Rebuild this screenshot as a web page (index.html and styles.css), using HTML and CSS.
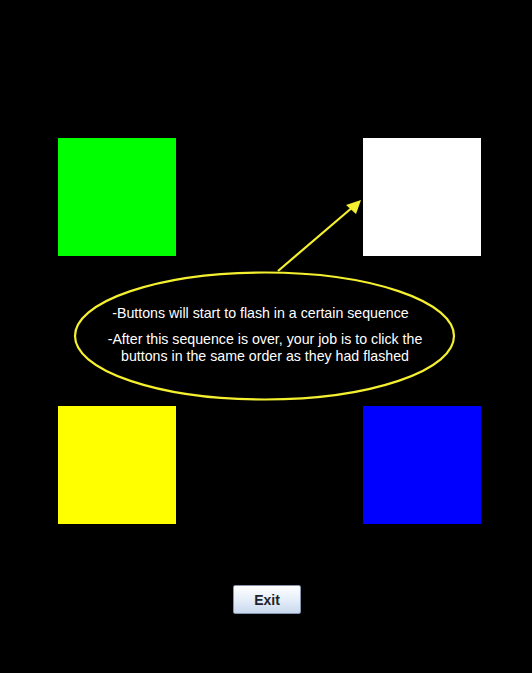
FILE: index.html
```html
<!DOCTYPE html>
<html>
<head>
<meta charset="utf-8">
<link rel="stylesheet" href="styles.css">
</head>
<body>
<div class="page">
  <div class="board">
    <div class="pad green"></div>
    <div class="pad white"></div>
    <div class="pad yellow"></div>
    <div class="pad blue"></div>
  </div>
  <div class="footer">
    <button class="exit">Exit</button>
  </div>
  <svg class="overlay" width="532" height="673" viewBox="0 0 532 673">
    <ellipse cx="264.5" cy="336" rx="189.5" ry="63.5" fill="#000" stroke="#f4f030" stroke-width="2.2"/>
    <line x1="278" y1="271" x2="354" y2="206" stroke="#f4f030" stroke-width="2.2"/>
    <polygon points="361,200 346,205 356,214" fill="#f4f030"/>
  </svg>
  <div class="tip">
    <p class="line first">-Buttons will start to flash in a certain sequence</p>
    <p class="line">-After this sequence is over, your job is to click the<br>buttons in the same order as they had flashed</p>
  </div>
</div>
</body>
</html>
```
FILE: styles.css
```css
html, body {
  margin: 0;
  padding: 0;
  background: #000;
}
.page {
  position: relative;
  width: 532px;
  height: 673px;
  background: #000;
  font-family: "Liberation Sans", Arial, sans-serif;
}
.board {
  padding: 138px 0 0 58px;
  display: grid;
  grid-template-columns: 118px 118px;
  grid-template-rows: 118px 118px;
  column-gap: 187px;
  row-gap: 150px;
}
.pad { width: 118px; height: 118px; }
.green { background: #00ff00; }
.white { background: #ffffff; }
.yellow { background: #ffff00; }
.blue { background: #0000ff; }
.footer {
  display: flex;
  justify-content: center;
  margin-top: 61px;
  padding-left: 2px;
}
.exit {
  width: 68px;
  height: 29px;
  border: 1px solid #8595ad;
  border-radius: 2px;
  background: linear-gradient(#ffffff, #e6eef9 50%, #c9d9ee);
  font-family: "Liberation Sans", Arial, sans-serif;
  font-weight: bold;
  font-size: 14px;
  color: #1e232b;
  padding: 0;
}
.overlay {
  position: absolute;
  left: 0;
  top: 0;
}
.tip {
  position: absolute;
  left: 60px;
  top: 305px;
  width: 410px;
  text-align: center;
  color: #fff;
  font-size: 14.2px;
  line-height: 17px;
}
.line { margin: 0 0 9px 0; }
.first { padding-right: 9px; }
```
